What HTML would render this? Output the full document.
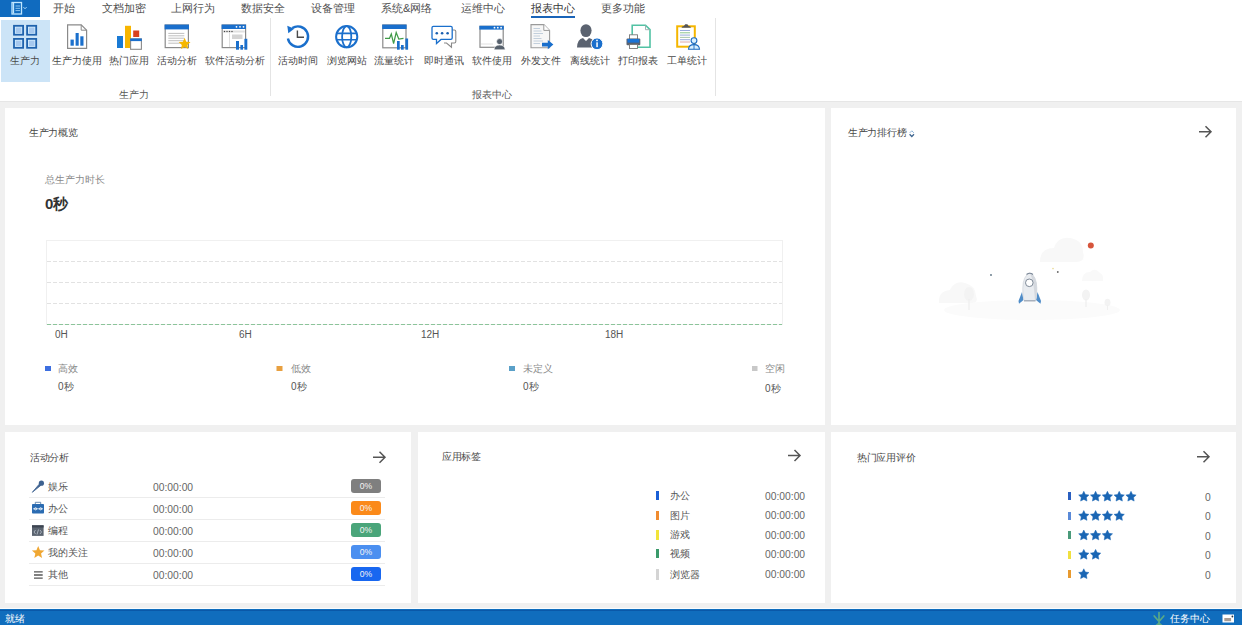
<!DOCTYPE html>
<html><head><meta charset="utf-8">
<style>
*{margin:0;padding:0;box-sizing:border-box}
html,body{width:1242px;height:625px;overflow:hidden;background:#fff;font-family:"Liberation Sans",sans-serif;line-height:1;color:#444}
.a{position:absolute;white-space:nowrap}
.tab{font-size:11.2px;color:#505050;top:3px}
.rl{font-size:9.85px;color:#4a4a4a;top:55.5px;width:80px;text-align:center}
.gl{font-size:9.85px;color:#5a5a5a;top:89.5px;width:80px;text-align:center}
.pan{position:absolute;background:#fff}
.ttl{font-size:10px;color:#4a4a4a;letter-spacing:-0.3px}
.tm{font-size:10.3px;color:#666}
.badge{position:absolute;width:30px;height:14px;border-radius:3px;color:#f4f4f4;font-size:8.6px;text-align:center;line-height:14px}
svg{position:absolute;overflow:visible}
</style></head><body>
<!-- gray background -->
<div class="a" style="left:0;top:101px;width:1242px;height:508px;background:#f0f0f0"></div>
<div class="a" style="left:0;top:101px;width:1242px;height:1px;background:#e6e6e6"></div>
<!-- status bar -->
<div class="a" style="left:0;top:608px;width:1242px;height:1px;background:#fafcfe"></div><div class="a" style="left:0;top:609px;width:1242px;height:16px;background:#106dbd"></div><div class="a" style="left:0;top:610px;width:1242px;height:1px;background:#0a58a8"></div>
<div class="a" style="left:5px;top:614px;font-size:10px;color:#fff">就绪</div>
<div class="a" style="left:1170px;top:614px;font-size:10px;color:#fff">任务中心</div>

<!-- top app button -->
<div class="a" style="left:0;top:0;width:40px;height:17px;background:#106bbf"></div>

<!-- tabs -->
<div class="a tab" style="left:53px">开始</div>
<div class="a tab" style="left:102px">文档加密</div>
<div class="a tab" style="left:171px">上网行为</div>
<div class="a tab" style="left:241px">数据安全</div>
<div class="a tab" style="left:311px">设备管理</div>
<div class="a tab" style="left:381px">系统&amp;网络</div>
<div class="a tab" style="left:461px">运维中心</div>
<div class="a tab" style="left:531px;color:#333">报表中心</div>
<div class="a" style="left:531px;top:16px;width:44px;height:2px;background:#1a64b8"></div>
<div class="a tab" style="left:601px">更多功能</div>

<!-- selected ribbon button -->
<div class="a" style="left:1px;top:20px;width:49px;height:62px;background:#cce4f7"></div>

<!-- ribbon labels -->
<div class="a rl" style="left:-14.7px">生产力</div>
<div class="a rl" style="left:37px">生产力使用</div>
<div class="a rl" style="left:88.9px">热门应用</div>
<div class="a rl" style="left:137.2px">活动分析</div>
<div class="a rl" style="left:194.5px">软件活动分析</div>
<div class="a rl" style="left:258.2px">活动时间</div>
<div class="a rl" style="left:306.5px">浏览网站</div>
<div class="a rl" style="left:354.4px">流量统计</div>
<div class="a rl" style="left:403.8px">即时通讯</div>
<div class="a rl" style="left:452px">软件使用</div>
<div class="a rl" style="left:500.7px">外发文件</div>
<div class="a rl" style="left:549.7px">离线统计</div>
<div class="a rl" style="left:597.9px">打印报表</div>
<div class="a rl" style="left:646.5px">工单统计</div>
<div class="a gl" style="left:93.8px">生产力</div>
<div class="a gl" style="left:452.2px">报表中心</div>
<div class="a" style="left:270px;top:18px;width:1px;height:78px;background:#e4e4e4"></div>
<div class="a" style="left:715px;top:18px;width:1px;height:78px;background:#e4e4e4"></div>

<!-- ICONS SVG (page coords) -->
<svg width="1242" height="100" style="left:0;top:0" viewBox="0 0 1242 100">
<rect x="12" y="2.5" width="9.5" height="11.5" fill="none" stroke="#bfe6ff" stroke-width="1.3"/><line x1="13.5" y1="3" x2="13.5" y2="13.5" stroke="#bfe6ff" stroke-width="1.3"/><path d="M15.5,6 H20 M15.5,8.3 H20 M15.5,10.6 H20" stroke="#9fd2f5" stroke-width="0.9"/><path d="M23.5,7.2 L25,8.7 L26.5,7.2" fill="none" stroke="#bfe6ff" stroke-width="1"/>
<rect x="14.0" y="25.8" width="9.1" height="8.9" fill="#d6efff" stroke="#1f62ad" stroke-width="1.8"/><rect x="15.7" y="27.5" width="5.7" height="5.5" fill="#a6c8ee"/><rect x="27.1" y="25.8" width="9.1" height="8.9" fill="#d6efff" stroke="#1f62ad" stroke-width="1.8"/><rect x="28.8" y="27.5" width="5.7" height="5.5" fill="#a6c8ee"/><rect x="14.0" y="38.9" width="9.1" height="8.9" fill="#d6efff" stroke="#1f62ad" stroke-width="1.8"/><rect x="15.7" y="40.6" width="5.7" height="5.5" fill="#a6c8ee"/><rect x="27.1" y="38.9" width="9.1" height="8.9" fill="#d6efff" stroke="#1f62ad" stroke-width="1.8"/><rect x="28.8" y="40.6" width="5.7" height="5.5" fill="#a6c8ee"/>
<path d="M67.6,24.8 H81.2 L86.6,30.2 V48.4 H67.6 Z" fill="#fff" stroke="#8a8a8a" stroke-width="1.2"/><path d="M81.2,24.8 V30.2 H86.6" fill="none" stroke="#8a8a8a" stroke-width="1"/>
<rect x="70.5" y="39.6" width="3.3" height="6.1" fill="#1a6fcc"/><rect x="75.6" y="33" width="3.1" height="12.7" fill="#1a6fcc"/><rect x="80.3" y="36.3" width="3.2" height="9.4" fill="#1a6fcc"/>
<rect x="117" y="36" width="6" height="12" fill="#1a7ad4"/><rect x="125" y="25.8" width="6" height="22.2" fill="#f7b500"/><rect x="133.2" y="30.5" width="6" height="6.5" fill="#d9411e"/>
<rect x="130.6" y="38.9" width="10.8" height="10.4" fill="#fff" stroke="#8a8a8a" stroke-width="1.1"/><rect x="130.2" y="38.5" width="11.6" height="2.6" fill="#1a6fcc"/>
<rect x="165.2" y="25" width="23.2" height="22.6" fill="#fff" stroke="#8a8a8a" stroke-width="1.2"/><rect x="164.6" y="24.6" width="24.4" height="4.8" fill="#1a6fcc"/>
<line x1="168.3" y1="33.4" x2="184.3" y2="33.4" stroke="#b8b8b8" stroke-width="0.9"/>
<line x1="168.3" y1="35.8" x2="184.3" y2="35.8" stroke="#b8b8b8" stroke-width="0.9"/>
<line x1="168.3" y1="38.2" x2="184.3" y2="38.2" stroke="#b8b8b8" stroke-width="0.9"/>
<line x1="168.3" y1="40.7" x2="184.3" y2="40.7" stroke="#b8b8b8" stroke-width="0.9"/>
<line x1="168.3" y1="43.2" x2="184.3" y2="43.2" stroke="#b8b8b8" stroke-width="0.9"/>
<path d="M184.60,37.80 L186.30,41.65 L190.50,42.08 L187.36,44.90 L188.24,49.02 L184.60,46.90 L180.96,49.02 L181.84,44.90 L178.70,42.08 L182.90,41.65Z" fill="#f6b700"/>
<rect x="222.2" y="25" width="23.4" height="22.6" fill="#fff" stroke="#8a8a8a" stroke-width="1.2"/><rect x="221.6" y="24.6" width="24.4" height="4.4" fill="#1a6fcc"/>
<circle cx="236.5" cy="26.8" r="0.9" fill="#fff"/><circle cx="240" cy="26.8" r="0.9" fill="#fff"/><circle cx="243.5" cy="26.8" r="0.9" fill="#fff"/>
<rect x="222.8" y="30.5" width="22" height="2" fill="#e0e0e0"/><circle cx="224.5" cy="31.5" r="0.7" fill="#444"/><circle cx="227" cy="31.5" r="0.7" fill="#444"/><circle cx="229.5" cy="31.5" r="0.7" fill="#444"/><circle cx="232" cy="31.5" r="0.7" fill="#444"/>
<line x1="229.5" y1="33" x2="229.5" y2="47" stroke="#d6d6d6" stroke-width="0.8"/><rect x="232" y="34.5" width="10.5" height="4.5" fill="#d4d4d4"/>
<rect x="236" y="41" width="3" height="8.7" fill="#1a6fcc"/><rect x="240.4" y="45" width="2.6" height="4.7" fill="#1a6fcc"/><rect x="244.4" y="38.8" width="2.9" height="10.9" fill="#1a6fcc"/>
<path d="M287.9,38.5 A10.2,10.2 0 1 0 292.3,28.1" fill="none" stroke="#1a6fcc" stroke-width="2.4"/><path d="M287.3,25.7 L294.2,28.8 L288.3,33.3 Z" fill="#1a6fcc"/><path d="M297.4,30.6 V37.3 H304" fill="none" stroke="#4a4a4a" stroke-width="1.4"/>
<circle cx="346.7" cy="36.7" r="10.6" fill="none" stroke="#1a6fcc" stroke-width="2"/><ellipse cx="346.7" cy="36.7" rx="4.6" ry="10.6" fill="none" stroke="#1a6fcc" stroke-width="1.8"/><path d="M336.8,33.4 H356.6 M336.8,39.8 H356.6" stroke="#1a6fcc" stroke-width="1.6"/>
<rect x="382.8" y="25" width="23.2" height="22.8" fill="#fff" stroke="#8a8a8a" stroke-width="1.2"/><rect x="382.2" y="24.6" width="24.4" height="4.4" fill="#1a6fcc"/>
<polyline points="385,38.3 389.5,38.3 391.3,34 393.6,43.5 396.2,32.5 398.8,39 403.5,38.3" fill="none" stroke="#3f9a47" stroke-width="1.2"/>
<rect x="397" y="41" width="2.7" height="8.7" fill="#1a6fcc"/><rect x="401" y="45" width="2.7" height="4.7" fill="#1a6fcc"/><rect x="405.4" y="38.5" width="2.7" height="11.2" fill="#1a6fcc"/>
<path d="M444,30 H454.3 Q455.8,30 455.8,31.5 V41.5 Q455.8,43 454.3,43 H451.5 V47.2 L446.5,43 H444" fill="#fff" stroke="#8a8a8a" stroke-width="1.1"/>
<path d="M433.4,26.4 H450.8 Q452.2,26.4 452.2,27.8 V38 Q452.2,39.4 450.8,39.4 H441 L436.5,43.6 V39.4 H433.4 Q432,39.4 432,38 V27.8 Q432,26.4 433.4,26.4 Z" fill="#fff" stroke="#1a6fcc" stroke-width="1.3"/>
<circle cx="436.8" cy="33.3" r="1.3" fill="#1a5fb0"/><circle cx="442.1" cy="33.3" r="1.3" fill="#1a5fb0"/><circle cx="447.6" cy="33.3" r="1.3" fill="#1a5fb0"/>
<rect x="480" y="26.3" width="23.2" height="21" fill="#fff" stroke="#8a8a8a" stroke-width="1.2"/><rect x="479.4" y="25.8" width="24.4" height="3.8" fill="#1a6fcc"/>
<circle cx="494.5" cy="27.7" r="0.9" fill="#fff"/><circle cx="497.8" cy="27.7" r="0.9" fill="#fff"/><circle cx="501.1" cy="27.7" r="0.9" fill="#fff"/>
<line x1="481" y1="44" x2="493" y2="44" stroke="#d8d8d8" stroke-width="0.8"/>
<circle cx="499.6" cy="41.6" r="3" fill="#56606c" stroke="#fff" stroke-width="0.6"/><path d="M494,49.8 Q494.5,45 499.6,45 Q504.7,45 505.2,49.8 Z" fill="#56606c" stroke="#fff" stroke-width="0.6"/>
<path d="M531,24.6 H543.8 L549.6,30.4 V47.8 H531 Z" fill="#f7f7f7" stroke="#9a9a9a" stroke-width="1.1"/><path d="M543.8,24.6 V30.4 H549.6" fill="#fff" stroke="#9a9a9a" stroke-width="1"/>
<line x1="533.5" y1="28.5" x2="540.0" y2="28.5" stroke="#c2cfdc" stroke-width="1"/>
<line x1="533.5" y1="31" x2="541.5" y2="31" stroke="#c2cfdc" stroke-width="1"/>
<line x1="533.5" y1="33.5" x2="543.0" y2="33.5" stroke="#c2cfdc" stroke-width="1"/>
<line x1="533.5" y1="36" x2="540.0" y2="36" stroke="#c2cfdc" stroke-width="1"/>
<line x1="533.5" y1="38.5" x2="541.5" y2="38.5" stroke="#c2cfdc" stroke-width="1"/>
<line x1="533.5" y1="41" x2="543.0" y2="41" stroke="#c2cfdc" stroke-width="1"/>
<line x1="533.5" y1="43.5" x2="540.0" y2="43.5" stroke="#c2cfdc" stroke-width="1"/>
<path d="M542,42.7 H547.8 V40 L553.4,44.6 L547.8,49.2 V46.5 H542 Z" fill="#1a6fcc"/>
<ellipse cx="586" cy="30.6" rx="5.6" ry="6.4" fill="#5b6370"/><path d="M577,47.6 Q577.2,39.3 583,38 L586,41 L589,38 Q594.8,39.3 595,47.6 Z" fill="#5b6370"/>
<circle cx="597" cy="43.8" r="5.9" fill="#1a6fcc" stroke="#fff" stroke-width="1"/><rect x="596.3" y="42.3" width="1.5" height="4.8" fill="#fff"/><circle cx="597" cy="40.4" r="0.9" fill="#fff"/>
<path d="M632.2,25.2 H645.5 L650,29.7 V47.2 H632.2 Z" fill="#fff" stroke="#52c2a4" stroke-width="1.6"/><path d="M645.5,25.2 V29.7 H650" fill="none" stroke="#9aa" stroke-width="0.9"/>
<rect x="629.5" y="34.8" width="8" height="4.5" fill="#fff" stroke="#777" stroke-width="0.9"/><rect x="626.5" y="38.5" width="13.8" height="6.8" rx="1" fill="#5b6370"/><rect x="627.5" y="39" width="11.8" height="3.6" fill="#1a73d6"/><rect x="629.5" y="44.5" width="8" height="4" fill="#fff" stroke="#777" stroke-width="0.9"/>
<rect x="677.2" y="26.3" width="17.6" height="20.4" fill="#fff" stroke="#f5b600" stroke-width="2"/><path d="M681.5,27.8 Q681.8,26 684,26 L685.2,24.3 H687.4 L688.6,26 Q690.8,26 691,27.8 Z" fill="#555"/>
<line x1="680" y1="30.5" x2="690" y2="30.5" stroke="#8fa3d8" stroke-width="0.9"/>
<line x1="680" y1="32.8" x2="690" y2="32.8" stroke="#7fbf7f" stroke-width="0.9"/>
<line x1="680" y1="35.1" x2="690" y2="35.1" stroke="#8fa3d8" stroke-width="0.9"/>
<line x1="680" y1="37.4" x2="690" y2="37.4" stroke="#a0c0a0" stroke-width="0.9"/>
<line x1="680" y1="39.7" x2="690" y2="39.7" stroke="#8fa3d8" stroke-width="0.9"/>
<line x1="680" y1="42" x2="690" y2="42" stroke="#d8a0a0" stroke-width="0.9"/>
<circle cx="694" cy="40.6" r="2.9" fill="#d8f0ff" stroke="#1a6ac0" stroke-width="1.1"/><path d="M688.5,49.3 Q688.8,44.6 694,44.6 Q699.2,44.6 699.5,49.3 Z" fill="#d8f0ff" stroke="#1a6ac0" stroke-width="1.1"/><line x1="694" y1="45" x2="694" y2="49" stroke="#1a6ac0" stroke-width="0.9"/>
</svg>

<!-- panels -->
<div class="pan" style="left:5px;top:108px;width:820px;height:317px"></div>
<div class="pan" style="left:831px;top:108px;width:405px;height:317px"></div>
<div class="pan" style="left:5px;top:432px;width:406px;height:171px"></div>
<div class="pan" style="left:418px;top:432px;width:407px;height:171px"></div>
<div class="pan" style="left:831px;top:432px;width:405px;height:171px"></div>

<!-- panel 1 -->
<div class="a ttl" style="left:29px;top:128px">生产力概览</div>
<div class="a" style="left:45px;top:175px;font-size:9.85px;color:#8a8a8a">总生产力时长</div>
<div class="a" style="left:45px;top:196px;font-size:15px;font-weight:bold;color:#333">0秒</div>


<!-- chart -->
<svg width="1242" height="625" style="left:0;top:0" viewBox="0 0 1242 625">
 <rect x="46.5" y="240.5" width="736" height="84" fill="none" stroke="#f0f0f0" stroke-width="1"/>
 <line x1="47" y1="261.5" x2="782" y2="261.5" stroke="#e2e2e2" stroke-width="1" stroke-dasharray="4 2"/>
 <line x1="47" y1="282.5" x2="782" y2="282.5" stroke="#e2e2e2" stroke-width="1" stroke-dasharray="4 2"/>
 <line x1="47" y1="303.5" x2="782" y2="303.5" stroke="#e2e2e2" stroke-width="1" stroke-dasharray="4 2"/>
 <line x1="47" y1="324.5" x2="782" y2="324.5" stroke="#8cc49a" stroke-width="1" stroke-dasharray="4 2"/>
 <rect x="45" y="366" width="6" height="5" fill="#3d6fe0"/>
 <rect x="276.5" y="366" width="6" height="5" fill="#e8a040"/>
 <rect x="509" y="366" width="6" height="5" fill="#5aa0c8"/>
 <rect x="752" y="366" width="5.5" height="5" fill="#c8c8c8"/>
</svg>
<div class="a" style="left:55px;top:330px;font-size:10px;color:#555">0H</div>
<div class="a" style="left:239px;top:330px;font-size:10px;color:#555">6H</div>
<div class="a" style="left:421px;top:330px;font-size:10px;color:#555">12H</div>
<div class="a" style="left:605px;top:330px;font-size:10px;color:#555">18H</div>
<div class="a" style="left:58px;top:364px;font-size:9.85px;color:#8a8a8a">高效</div>
<div class="a" style="left:58px;top:382px;font-size:10px;color:#555">0秒</div>
<div class="a" style="left:291px;top:364px;font-size:9.85px;color:#8a8a8a">低效</div>
<div class="a" style="left:291px;top:382px;font-size:10px;color:#555">0秒</div>
<div class="a" style="left:523px;top:364px;font-size:9.85px;color:#8a8a8a">未定义</div>
<div class="a" style="left:523px;top:382px;font-size:10px;color:#555">0秒</div>
<div class="a" style="left:765px;top:364px;font-size:9.85px;color:#8a8a8a">空闲</div>
<div class="a" style="left:765px;top:384px;font-size:10px;color:#555">0秒</div>

<!-- panel 2 -->
<div class="a ttl" style="left:848px;top:128px">生产力排行榜</div>

<!-- bottom titles -->
<div class="a ttl" style="left:30px;top:453px">活动分析</div>
<div class="a ttl" style="left:442px;top:452px">应用标签</div>
<div class="a ttl" style="left:857px;top:453px">热门应用评价</div>

<!-- activity list -->
<div class="a" style="left:47.5px;top:482px;font-size:9.85px;color:#555">娱乐</div>
<div class="a" style="left:47.5px;top:504px;font-size:9.85px;color:#555">办公</div>
<div class="a" style="left:47.5px;top:526px;font-size:9.85px;color:#555">编程</div>
<div class="a" style="left:47.5px;top:548px;font-size:9.85px;color:#555">我的关注</div>
<div class="a" style="left:47.5px;top:570px;font-size:9.85px;color:#555">其他</div>
<div class="a tm" style="left:153px;top:483px">00:00:00</div>
<div class="a tm" style="left:153px;top:505px">00:00:00</div>
<div class="a tm" style="left:153px;top:527px">00:00:00</div>
<div class="a tm" style="left:153px;top:549px">00:00:00</div>
<div class="a tm" style="left:153px;top:571px">00:00:00</div>
<div class="a" style="left:29px;top:497px;width:356px;height:1px;background:#ececec"></div>
<div class="a" style="left:29px;top:519px;width:356px;height:1px;background:#ececec"></div>
<div class="a" style="left:29px;top:541px;width:356px;height:1px;background:#ececec"></div>
<div class="a" style="left:29px;top:563px;width:356px;height:1px;background:#ececec"></div>
<div class="a" style="left:29px;top:585px;width:356px;height:1px;background:#ececec"></div>
<div class="badge" style="left:351px;top:479px;background:#7f7f7f">0%</div>
<div class="badge" style="left:351px;top:501px;background:#fb8a1a">0%</div>
<div class="badge" style="left:351px;top:523px;background:#4aa57a">0%</div>
<div class="badge" style="left:351px;top:545px;background:#4b8ff0">0%</div>
<div class="badge" style="left:351px;top:567px;background:#1867f0">0%</div>

<!-- app tags -->
<div class="a" style="left:656px;top:491px;width:3px;height:9px;background:#1a5fd6"></div>
<div class="a" style="left:656px;top:511px;width:3px;height:9px;background:#f08c30"></div>
<div class="a" style="left:656px;top:530px;width:3px;height:10px;background:#f2e43a"></div>
<div class="a" style="left:656px;top:549px;width:3px;height:9px;background:#3a9a6a"></div>
<div class="a" style="left:656px;top:569px;width:3px;height:11px;background:#d4d4d4"></div>
<div class="a" style="left:670px;top:491px;font-size:9.85px;color:#555">办公</div>
<div class="a" style="left:670px;top:511px;font-size:9.85px;color:#555">图片</div>
<div class="a" style="left:670px;top:530px;font-size:9.85px;color:#555">游戏</div>
<div class="a" style="left:670px;top:549px;font-size:9.85px;color:#555">视频</div>
<div class="a" style="left:670px;top:570px;font-size:9.85px;color:#555">浏览器</div>
<div class="a tm" style="left:765px;top:492px">00:00:00</div>
<div class="a tm" style="left:765px;top:511px">00:00:00</div>
<div class="a tm" style="left:765px;top:531px">00:00:00</div>
<div class="a tm" style="left:765px;top:550px">00:00:00</div>
<div class="a tm" style="left:765px;top:570px">00:00:00</div>

<!-- ratings -->
<div class="a" style="left:1068px;top:492px;width:3px;height:8px;background:#2a5fc0"></div>
<div class="a" style="left:1068px;top:511.5px;width:3px;height:8px;background:#5a8ad8"></div>
<div class="a" style="left:1068px;top:531px;width:3px;height:8px;background:#4a9a7a"></div>
<div class="a" style="left:1068px;top:550.5px;width:3px;height:8px;background:#f0e040"></div>
<div class="a" style="left:1068px;top:570px;width:3px;height:8px;background:#e89a30"></div>
<div class="a tm" style="left:1205px;top:493px">0</div>
<div class="a tm" style="left:1205px;top:512px">0</div>
<div class="a tm" style="left:1205px;top:532px">0</div>
<div class="a tm" style="left:1205px;top:551px">0</div>
<div class="a tm" style="left:1205px;top:571px">0</div>

<svg width="1242" height="625" style="left:0;top:0" viewBox="0 0 1242 625"><path d="M1083.80,491.30 L1085.39,494.52 L1088.94,495.03 L1086.37,497.53 L1086.97,501.07 L1083.80,499.40 L1080.63,501.07 L1081.23,497.53 L1078.66,495.03 L1082.21,494.52Z" fill="#1a66b4" stroke="#1a66b4" stroke-width="0.5" stroke-linejoin="round"/><path d="M1095.60,491.30 L1097.19,494.52 L1100.74,495.03 L1098.17,497.53 L1098.77,501.07 L1095.60,499.40 L1092.43,501.07 L1093.03,497.53 L1090.46,495.03 L1094.01,494.52Z" fill="#1a66b4" stroke="#1a66b4" stroke-width="0.5" stroke-linejoin="round"/><path d="M1107.40,491.30 L1108.99,494.52 L1112.54,495.03 L1109.97,497.53 L1110.57,501.07 L1107.40,499.40 L1104.23,501.07 L1104.83,497.53 L1102.26,495.03 L1105.81,494.52Z" fill="#1a66b4" stroke="#1a66b4" stroke-width="0.5" stroke-linejoin="round"/><path d="M1119.20,491.30 L1120.79,494.52 L1124.34,495.03 L1121.77,497.53 L1122.37,501.07 L1119.20,499.40 L1116.03,501.07 L1116.63,497.53 L1114.06,495.03 L1117.61,494.52Z" fill="#1a66b4" stroke="#1a66b4" stroke-width="0.5" stroke-linejoin="round"/><path d="M1131.00,491.30 L1132.59,494.52 L1136.14,495.03 L1133.57,497.53 L1134.17,501.07 L1131.00,499.40 L1127.83,501.07 L1128.43,497.53 L1125.86,495.03 L1129.41,494.52Z" fill="#1a66b4" stroke="#1a66b4" stroke-width="0.5" stroke-linejoin="round"/><path d="M1083.80,510.60 L1085.39,513.82 L1088.94,514.33 L1086.37,516.83 L1086.97,520.37 L1083.80,518.70 L1080.63,520.37 L1081.23,516.83 L1078.66,514.33 L1082.21,513.82Z" fill="#1a66b4" stroke="#1a66b4" stroke-width="0.5" stroke-linejoin="round"/><path d="M1095.60,510.60 L1097.19,513.82 L1100.74,514.33 L1098.17,516.83 L1098.77,520.37 L1095.60,518.70 L1092.43,520.37 L1093.03,516.83 L1090.46,514.33 L1094.01,513.82Z" fill="#1a66b4" stroke="#1a66b4" stroke-width="0.5" stroke-linejoin="round"/><path d="M1107.40,510.60 L1108.99,513.82 L1112.54,514.33 L1109.97,516.83 L1110.57,520.37 L1107.40,518.70 L1104.23,520.37 L1104.83,516.83 L1102.26,514.33 L1105.81,513.82Z" fill="#1a66b4" stroke="#1a66b4" stroke-width="0.5" stroke-linejoin="round"/><path d="M1119.20,510.60 L1120.79,513.82 L1124.34,514.33 L1121.77,516.83 L1122.37,520.37 L1119.20,518.70 L1116.03,520.37 L1116.63,516.83 L1114.06,514.33 L1117.61,513.82Z" fill="#1a66b4" stroke="#1a66b4" stroke-width="0.5" stroke-linejoin="round"/><path d="M1083.80,530.10 L1085.39,533.32 L1088.94,533.83 L1086.37,536.33 L1086.97,539.87 L1083.80,538.20 L1080.63,539.87 L1081.23,536.33 L1078.66,533.83 L1082.21,533.32Z" fill="#1a66b4" stroke="#1a66b4" stroke-width="0.5" stroke-linejoin="round"/><path d="M1095.60,530.10 L1097.19,533.32 L1100.74,533.83 L1098.17,536.33 L1098.77,539.87 L1095.60,538.20 L1092.43,539.87 L1093.03,536.33 L1090.46,533.83 L1094.01,533.32Z" fill="#1a66b4" stroke="#1a66b4" stroke-width="0.5" stroke-linejoin="round"/><path d="M1107.40,530.10 L1108.99,533.32 L1112.54,533.83 L1109.97,536.33 L1110.57,539.87 L1107.40,538.20 L1104.23,539.87 L1104.83,536.33 L1102.26,533.83 L1105.81,533.32Z" fill="#1a66b4" stroke="#1a66b4" stroke-width="0.5" stroke-linejoin="round"/><path d="M1083.80,549.40 L1085.39,552.62 L1088.94,553.13 L1086.37,555.63 L1086.97,559.17 L1083.80,557.50 L1080.63,559.17 L1081.23,555.63 L1078.66,553.13 L1082.21,552.62Z" fill="#1a66b4" stroke="#1a66b4" stroke-width="0.5" stroke-linejoin="round"/><path d="M1095.60,549.40 L1097.19,552.62 L1100.74,553.13 L1098.17,555.63 L1098.77,559.17 L1095.60,557.50 L1092.43,559.17 L1093.03,555.63 L1090.46,553.13 L1094.01,552.62Z" fill="#1a66b4" stroke="#1a66b4" stroke-width="0.5" stroke-linejoin="round"/><path d="M1083.80,568.80 L1085.39,572.02 L1088.94,572.53 L1086.37,575.03 L1086.97,578.57 L1083.80,576.90 L1080.63,578.57 L1081.23,575.03 L1078.66,572.53 L1082.21,572.02Z" fill="#1a66b4" stroke="#1a66b4" stroke-width="0.5" stroke-linejoin="round"/><path d="M1199,131.7 H1210.5 M1205.5,126.19999999999999 L1211,131.7 L1205.5,137.2" fill="none" stroke="#555" stroke-width="1.5"/><path d="M373,457.2 H384.5 M379.5,451.7 L385,457.2 L379.5,462.7" fill="none" stroke="#555" stroke-width="1.5"/><path d="M788,455.5 H799.5 M794.5,450.0 L800,455.5 L794.5,461.0" fill="none" stroke="#555" stroke-width="1.5"/><path d="M1197,456.8 H1208.5 M1203.5,451.3 L1209,456.8 L1203.5,462.3" fill="none" stroke="#555" stroke-width="1.5"/></svg>
<svg width="1242" height="625" style="left:0;top:0" viewBox="0 0 1242 625"><path d="M32.3,492.3 L39.2,484.2 L40.6,485.6 Z" fill="#3d6290" stroke="#3d6290" stroke-width="0.8" stroke-linejoin="round"/><circle cx="41.4" cy="483.2" r="2.6" fill="#3d6290"/><rect x="32" y="504" width="12" height="9.6" rx="0.8" fill="#2b6cb2"/><path d="M35.3,504 V502.3 H40.7 V504" fill="none" stroke="#5a7fa8" stroke-width="0.9"/><path d="M33,508.8 H43" stroke="#e8f0f8" stroke-width="0.8"/><circle cx="35.6" cy="508.8" r="1.1" fill="none" stroke="#fff" stroke-width="0.8"/><circle cx="40.6" cy="508.8" r="1.1" fill="none" stroke="#fff" stroke-width="0.8"/><rect x="32" y="525.3" width="11.6" height="10.6" fill="#5b6470"/><rect x="32" y="525.3" width="11.6" height="2.2" fill="#3c4450"/><path d="M35.5,530 L34,532 L35.5,534 M40,530 L41.5,532 L40,534 M38.5,529.5 L37,534.5" fill="none" stroke="#c9d2dc" stroke-width="0.7"/><path d="M38.20,546.00 L39.96,550.17 L44.48,550.56 L41.05,553.53 L42.08,557.94 L38.20,555.60 L34.32,557.94 L35.35,553.53 L31.92,550.56 L36.44,550.17Z" fill="#f0a732"/><path d="M34,571.8 H42.7 M34,575 H42.7 M34,578.2 H42.7" stroke="#555" stroke-width="1.3"/><path d="M909.8,132.8 L911.8,130.8 L913.8,132.8" fill="none" stroke="#8fb4d8" stroke-width="1"/><path d="M909.6,134.3 L911.8,136.5 L914,134.3" fill="none" stroke="#3f6690" stroke-width="1.3"/><ellipse cx="1032" cy="310" rx="88" ry="10" fill="#fbfbfb"/><path d="M1040,262 Q1040,248 1054,248 Q1058,236 1070,238 Q1083,240 1083,252 Q1086,262 1076,262 Z" fill="#f8f8f8"/><path d="M1082,281 Q1082,272 1090,272 Q1095,267 1100,273 Q1104,275 1103,281 Z" fill="#f9f9f9"/><path d="M939,303 Q938,291 950,290 Q955,280 965,283 Q976,286 976,296 Q979,303 972,303 Z" fill="#f8f8f8"/><ellipse cx="969" cy="294" rx="5" ry="7" fill="#f3f3f3"/><line x1="969" y1="299" x2="969" y2="310" stroke="#efefef" stroke-width="1.2"/><ellipse cx="1086" cy="295" rx="4" ry="5.5" fill="#f3f3f3"/><line x1="1086" y1="299" x2="1086" y2="307" stroke="#efefef" stroke-width="1.2"/><ellipse cx="1107.5" cy="302.5" rx="3" ry="3.8" fill="#f3f3f3"/><line x1="1107.5" y1="305" x2="1107.5" y2="310" stroke="#f0f0f0" stroke-width="1"/><circle cx="1090.8" cy="245.4" r="3" fill="#d6553c"/><circle cx="991" cy="275" r="0.9" fill="#5a7080"/><circle cx="1057.8" cy="272" r="0.9" fill="#666"/><circle cx="1053" cy="268.6" r="0.8" fill="#e8d890"/><path d="M1022,292 L1018.5,301 L1019,303.8 L1023.5,300 Z" fill="#4f8cc8"/><path d="M1037.5,292 L1041,301 L1040.5,303.8 L1036,300 Z" fill="#4f8cc8"/><path d="M1029.8,272.8 Q1023,276 1022.8,288 Q1022.6,296 1024,300.5 H1035.5 Q1037,296 1036.8,288 Q1036.6,276 1029.8,272.8 Z" fill="#e9ecf0" stroke="#c8ccd4" stroke-width="0.6"/><path d="M1029.8,272.8 Q1034,281 1035,300.5 H1036 Q1037,296 1036.8,288 Q1036.6,276 1029.8,272.8 Z" fill="#d4d8de"/><path d="M1026.5,274.5 Q1029.8,272 1033,274.5" fill="none" stroke="#7a8696" stroke-width="1.2"/><circle cx="1029.3" cy="282.8" r="3.8" fill="#fff" stroke="#7f8a98" stroke-width="1"/><rect x="1024" y="300" width="11.5" height="1.5" fill="#a8b0bc"/><path d="M1159,612.5 V625 M1154.2,616 L1159,621.5 L1163.8,616" fill="none" stroke="#5aa987" stroke-width="1.7" stroke-linecap="round"/><path d="M1155,625.5 L1159,622 L1163,625.5 Z" fill="#5aa987"/><rect x="1222.5" y="614.5" width="11.5" height="8" fill="#fff"/><rect x="1224.3" y="618" width="6.8" height="3.2" fill="#a89c94"/><circle cx="1232.4" cy="616.5" r="0.9" fill="#234"/></svg>
</body></html>
